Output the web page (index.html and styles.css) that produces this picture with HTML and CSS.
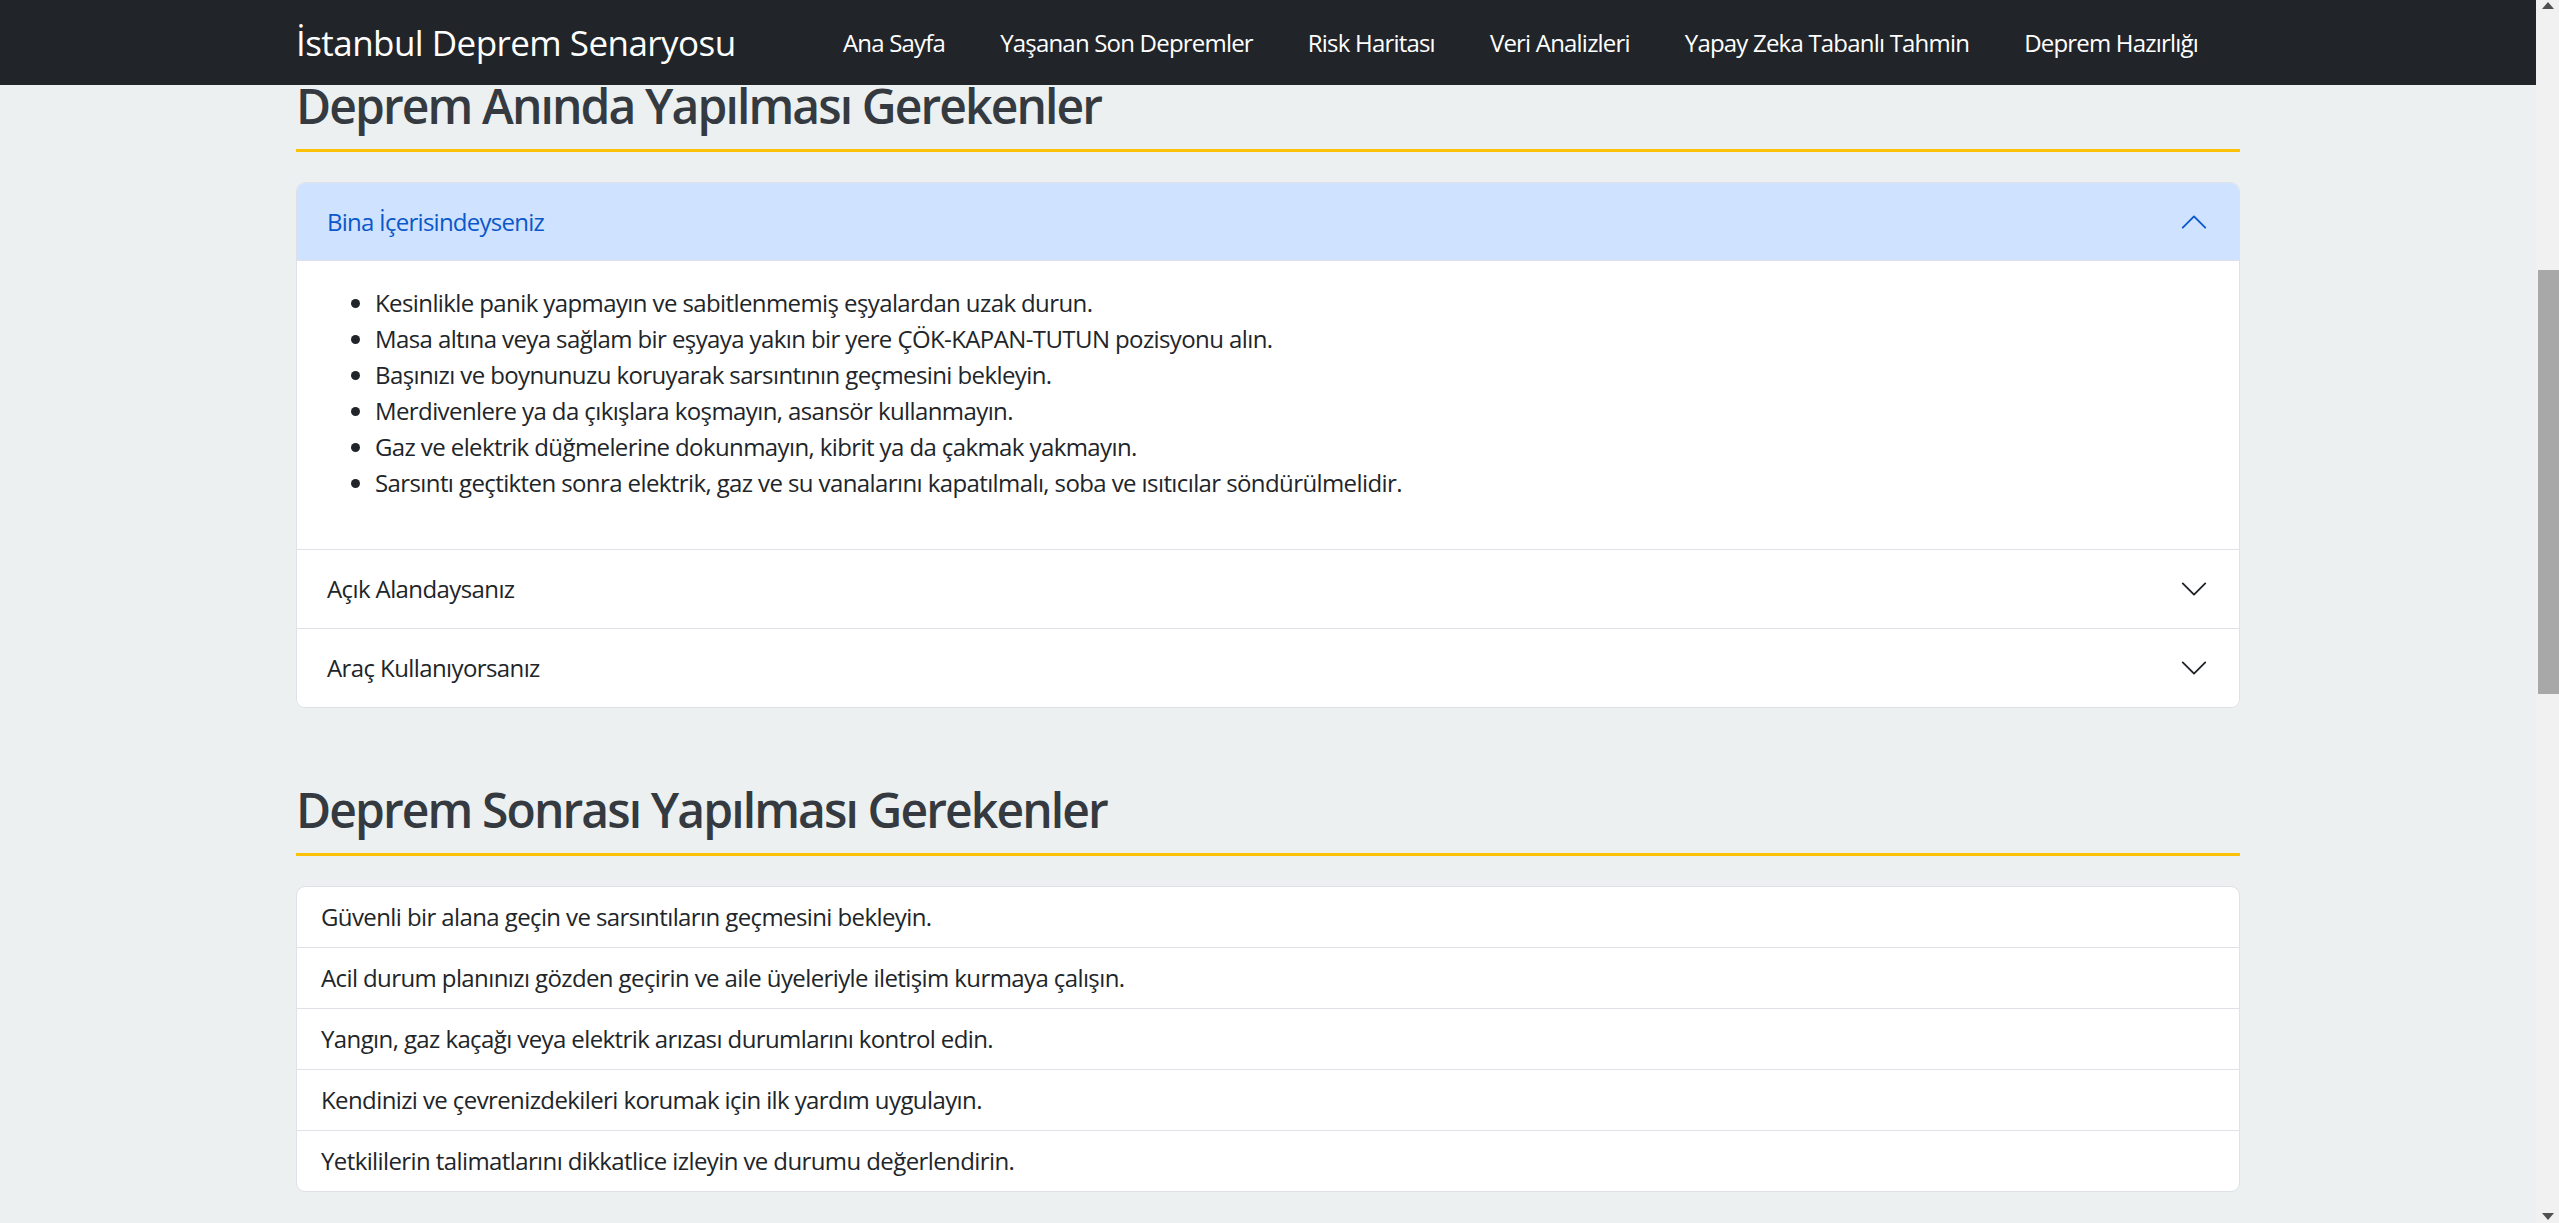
FILE: index.html
```html
<!DOCTYPE html>
<html lang="tr">
<head>
<meta charset="utf-8">
<title>İstanbul Deprem Senaryosu - Deprem Hazırlığı</title>
<link rel="stylesheet" href="styles.css">
</head>
<body>
<div class="page">
  <nav class="navbar">
    <div class="container nav-inner">
      <a class="brand" href="#">İstanbul Deprem Senaryosu</a>
      <ul class="nav-links">
        <li><a href="#">Ana Sayfa</a></li>
        <li><a href="#">Yaşanan Son Depremler</a></li>
        <li><a href="#">Risk Haritası</a></li>
        <li><a href="#">Veri Analizleri</a></li>
        <li><a href="#">Yapay Zeka Tabanlı Tahmin</a></li>
        <li><a href="#">Deprem Hazırlığı</a></li>
      </ul>
    </div>
  </nav>

  <main class="container">
    <section class="section first">
      <h2 class="section-title">Deprem Anında Yapılması Gerekenler</h2>
      <div class="accordion">
        <div class="acc-item">
          <button class="acc-btn active" type="button">
            <span>Bina İçerisindeyseniz</span>
            <svg class="chev" viewBox="0 0 16 16" fill="none" stroke-linecap="round" stroke-linejoin="round"><path d="M2 11L8 5L14 11"/></svg>
          </button>
          <div class="acc-body">
            <ul>
              <li>Kesinlikle panik yapmayın ve sabitlenmemiş eşyalardan uzak durun.</li>
              <li>Masa altına veya sağlam bir eşyaya yakın bir yere ÇÖK-KAPAN-TUTUN pozisyonu alın.</li>
              <li>Başınızı ve boynunuzu koruyarak sarsıntının geçmesini bekleyin.</li>
              <li>Merdivenlere ya da çıkışlara koşmayın, asansör kullanmayın.</li>
              <li>Gaz ve elektrik düğmelerine dokunmayın, kibrit ya da çakmak yakmayın.</li>
              <li>Sarsıntı geçtikten sonra elektrik, gaz ve su vanalarını kapatılmalı, soba ve ısıtıcılar söndürülmelidir.</li>
            </ul>
          </div>
        </div>
        <div class="acc-item">
          <button class="acc-btn" type="button">
            <span>Açık Alandaysanız</span>
            <svg class="chev" viewBox="0 0 16 16" fill="none" stroke-linecap="round" stroke-linejoin="round"><path d="M2 5L8 11L14 5"/></svg>
          </button>
        </div>
        <div class="acc-item">
          <button class="acc-btn" type="button">
            <span>Araç Kullanıyorsanız</span>
            <svg class="chev" viewBox="0 0 16 16" fill="none" stroke-linecap="round" stroke-linejoin="round"><path d="M2 5L8 11L14 5"/></svg>
          </button>
        </div>
      </div>
    </section>

    <section class="section second">
      <h2 class="section-title">Deprem Sonrası Yapılması Gerekenler</h2>
      <ul class="list-group">
        <li>Güvenli bir alana geçin ve sarsıntıların geçmesini bekleyin.</li>
        <li>Acil durum planınızı gözden geçirin ve aile üyeleriyle iletişim kurmaya çalışın.</li>
        <li>Yangın, gaz kaçağı veya elektrik arızası durumlarını kontrol edin.</li>
        <li>Kendinizi ve çevrenizdekileri korumak için ilk yardım uygulayın.</li>
        <li>Yetkililerin talimatlarını dikkatlice izleyin ve durumu değerlendirin.</li>
      </ul>
    </section>
  </main>
</div>

<div class="scrollbar" aria-hidden="true">
  <svg class="sb-arrow up" viewBox="0 0 12 7"><path d="M0 7L6 0L12 7Z"/></svg>
  <div class="sb-thumb"></div>
  <svg class="sb-arrow down" viewBox="0 0 12 7"><path d="M0 0L6 7L12 0Z"/></svg>
</div>
</body>
</html>
```

FILE: styles.css
```css
* { box-sizing: border-box; }

html, body {
  margin: 0;
  padding: 0;
  height: 100%;
  overflow: hidden;
}

body {
  background: #ecf0f1;
  color: #212529;
  font-family: "Open Sans", "Noto Sans", sans-serif;
  font-size: 24px;
  line-height: 36px;
}

.page {
  margin-right: 23px;
}

.container {
  width: 100%;
  max-width: 1980px;
  margin: 0 auto;
  padding: 0 18px;
}

/* Navbar */
.navbar {
  background: #212529;
  height: 85px;
}

.nav-inner {
  display: flex;
  align-items: center;
  height: 100%;
}

.brand {
  color: #fff;
  text-decoration: none;
  font-size: 35px;
  line-height: 45px;
  letter-spacing: -0.55px;
}

.nav-links {
  list-style: none;
  margin: 0 30px 0 auto;
  padding: 0;
  display: flex;
  gap: 31px;
}

.nav-links a {
  display: block;
  padding: 12px;
  color: #fff;
  text-decoration: none;
  font-size: 24px;
  line-height: 36px;
  letter-spacing: -0.8px;
}

/* Sections */
.section-title {
  margin: 0 0 30px;
  font-size: 48px;
  line-height: 57.6px;
  font-weight: 600;
  color: #343a40;
  padding-bottom: 14.4px;
  border-bottom: 3px solid #ffc107;
  letter-spacing: -1.9px;
}

.section.first {
  margin-top: -8px;
}

.section.second {
  margin-top: 73px;
}

/* Accordion */
.accordion {
  background: #fff;
  border: 1px solid #dee2e6;
  border-radius: 9px;
  overflow: hidden;
}

.acc-item + .acc-item {
  border-top: 1px solid #dee2e6;
}

.acc-btn {
  width: 100%;
  display: flex;
  align-items: center;
  justify-content: space-between;
  padding: 24px 30px;
  border: 0;
  background: #fff;
  font-family: inherit;
  font-size: 24px;
  line-height: 30px;
  color: #212529;
  text-align: left;
  letter-spacing: -0.6px;
  cursor: pointer;
}

.acc-btn.active {
  background: #cfe2ff;
  color: #0a58ca;
  box-shadow: inset 0 -1px 0 #dee2e6;
  letter-spacing: -0.75px;
}

.chev {
  width: 30px;
  height: 30px;
  flex: none;
  stroke: #212529;
  stroke-width: 1;
}

.acc-btn.active .chev {
  stroke: #0a58ca;
}

.acc-body {
  padding: 24px 30px;
}

.acc-body ul {
  margin: 0 0 24px;
  padding-left: 48px;
  letter-spacing: -0.6px;
}

/* List group */
.list-group {
  list-style: none;
  margin: 0;
  padding: 0;
  background: #fff;
  border: 1px solid #dee2e6;
  border-radius: 9px;
  overflow: hidden;
}

.list-group li {
  padding: 12px 24px;
  letter-spacing: -0.6px;
}

.list-group li + li {
  border-top: 1px solid #dee2e6;
}

/* Fake classic scrollbar */
.scrollbar {
  position: fixed;
  top: 0;
  right: 0;
  width: 23px;
  height: 100%;
  background: #f1f1f1;
}

.sb-arrow {
  position: absolute;
  left: 6px;
  width: 12px;
  height: 7px;
  fill: #505050;
}

.sb-arrow.up { top: 2px; }
.sb-arrow.down { bottom: 3px; }

.sb-thumb {
  position: absolute;
  top: 270px;
  left: 2px;
  right: 0;
  height: 424px;
  background: #a8a8a8;
}
```
